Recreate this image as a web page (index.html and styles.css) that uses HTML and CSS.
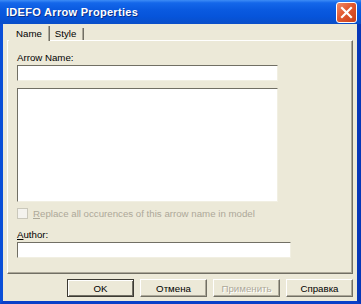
FILE: index.html
```html
<!DOCTYPE html>
<html>
<head>
<meta charset="utf-8">
<link rel="stylesheet" href="styles.css">
</head>
<body>
<div class="window">
  <div class="titlebar">
    <span class="title">IDEFO Arrow Properties</span>
    <span class="close">
      <svg width="21" height="21" viewBox="0 0 21 21">
        <path d="M6 6 L15 15 M15 6 L6 15" stroke="#fff" stroke-width="2.2" stroke-linecap="square"/>
      </svg>
    </span>
  </div>
  <div class="frame">
    <div class="tabs">
      <span class="tab active">Name</span>
      <span class="tab">Style</span>
    </div>
    <div class="panel">
      <div class="label">Arrow Name:</div>
      <div class="field"></div>
      <div class="area"></div>
      <div class="check-row">
        <span class="checkbox"></span>
        <span class="check-text"><u>R</u>eplace all occurences of this arrow name in model</span>
      </div>
      <div class="label author-label"><u>A</u>uthor:</div>
      <div class="field wide"></div>
    </div>
    <div class="buttons">
      <span class="btn default">OK</span>
      <span class="btn">Отмена</span>
      <span class="btn disabled">Применить</span>
      <span class="btn">Справка</span>
    </div>
  </div>
</div>
</body>
</html>
```
FILE: styles.css
```css
html, body {
  margin: 0;
  padding: 0;
  background: #ece9d8;
}
.window {
  width: 361px;
  height: 304px;
  display: flex;
  flex-direction: column;
  font-family: "Liberation Sans", Arial, sans-serif;
  font-size: 9.7px;
  color: #000;
}
.titlebar {
  height: 24px;
  flex: 0 0 24px;
  display: flex;
  align-items: center;
  justify-content: space-between;
  padding: 0 4px 0 6px;
  box-sizing: border-box;
  background: linear-gradient(to bottom, #3d8cf6 0%, #1467ea 12%, #0a5ae0 40%, #0654da 70%, #0a4ec8 100%);
}
.title {
  color: #fff;
  font-weight: bold;
  font-size: 11px;
  letter-spacing: 0.3px;
  text-shadow: 1px 1px 0 #0a2f8a;
}
.close {
  width: 21px;
  height: 21px;
  box-sizing: border-box;
  border: 1px solid #fff;
  border-radius: 3px;
  background: linear-gradient(135deg, #f08a6a 0%, #e2582f 45%, #c8401a 100%);
  display: flex;
}
.close svg {
  margin: -1px;
}
.frame {
  flex: 1;
  display: flex;
  flex-direction: column;
  border-left: 3px solid #0a4fd8;
  border-right: 4px solid #0737b8;
  border-bottom: 3px solid #0a3fc8;
  padding: 0 0 0 4px;
}
.tabs {
  height: 16px;
  display: flex;
  align-items: flex-end;
  padding-left: 2px;
}
.tab {
  height: 12px;
  line-height: 12px;
  padding: 0 7px 0 5px;
  border-right: 1px solid #716f64;
  box-shadow: inset -1px 0 0 #aca899;
}
.tab.active {
  height: 15px;
  line-height: 15px;
  padding: 0 7px 0 7px;
  margin-bottom: -1px;
  background: #ece9d8;
  position: relative;
  z-index: 1;
}
.panel {
  width: 346px;
  height: 234px;
  box-sizing: border-box;
  border-top: 1px solid #fff;
  border-left: 1px solid #fff;
  border-right: 1px solid #716f64;
  border-bottom: 1px solid #716f64;
  box-shadow: inset -1px -1px 0 #aca899;
  padding: 11px 0 0 9px;
  display: flex;
  flex-direction: column;
}
.label {
  height: 12px;
  line-height: 12px;
  margin-bottom: 1px;
}
.field {
  width: 261px;
  height: 16px;
  box-sizing: border-box;
  background: #fff;
  border-top: 1px solid #716f64;
  border-left: 1px solid #716f64;
  border-right: 1px solid #f1efe2;
  border-bottom: 1px solid #f1efe2;
}
.field.wide {
  width: 274px;
}
.area {
  width: 261px;
  height: 114px;
  margin-top: 7px;
  box-sizing: border-box;
  background: #fff;
  border-top: 1px solid #716f64;
  border-left: 1px solid #716f64;
  border-right: 1px solid #f1efe2;
  border-bottom: 1px solid #f1efe2;
}
.check-row {
  margin-top: 5px;
  height: 12px;
  display: flex;
  align-items: center;
}
.checkbox {
  width: 11px;
  height: 11px;
  box-sizing: border-box;
  border: 1px solid #cac8bb;
  background: #f4f3ee;
  margin-right: 5px;
}
.check-text {
  color: #aca899;
}
.author-label {
  margin-top: 10px;
}
.buttons {
  margin-top: 5px;
  display: flex;
  gap: 6px;
  justify-content: flex-end;
  padding-right: 4px;
}
.btn {
  width: 67px;
  height: 18px;
  box-sizing: border-box;
  display: flex;
  align-items: center;
  justify-content: center;
  border-top: 1px solid #fff;
  border-left: 1px solid #fff;
  border-right: 1px solid #716f64;
  border-bottom: 1px solid #716f64;
  box-shadow: inset -1px -1px 0 #aca899;
  background: #ece9d8;
}
.btn.default {
  border: 1px solid #3c3a33;
  box-shadow: inset 1px 1px 0 #fff, inset -1px -1px 0 #716f64;
}
.btn.disabled {
  color: #aca899;
  text-shadow: 1px 1px 0 #fff;
}
```
